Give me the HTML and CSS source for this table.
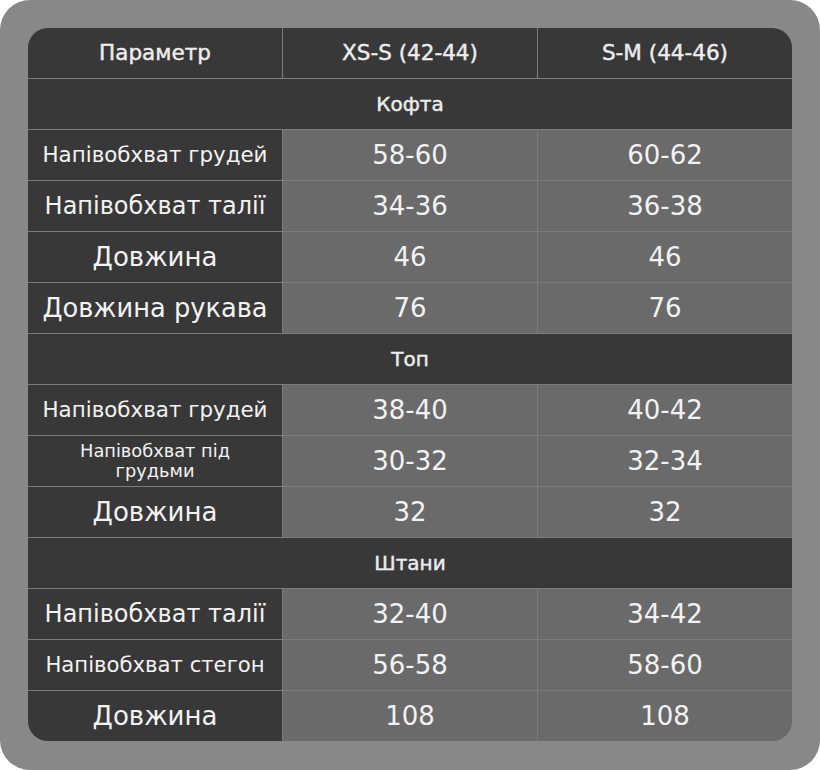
FILE: index.html
```html
<!DOCTYPE html>
<html lang="uk">
<head>
<meta charset="utf-8">
<title>Розмірна сітка</title>
<link rel="stylesheet" href="styles.css">
</head>
<body>
<div class="frame">
  <div class="grid">
    <div class="cell head">Параметр</div>
    <div class="cell head">XS-S (42-44)</div>
    <div class="cell head">S-M (44-46)</div>

    <div class="cell cat">Кофта</div>

    <div class="cell name s21">Напівобхват грудей</div>
    <div class="cell val">58-60</div>
    <div class="cell val">60-62</div>

    <div class="cell name s24">Напівобхват талії</div>
    <div class="cell val">34-36</div>
    <div class="cell val">36-38</div>

    <div class="cell name s26">Довжина</div>
    <div class="cell val">46</div>
    <div class="cell val">46</div>

    <div class="cell name s25">Довжина рукава</div>
    <div class="cell val">76</div>
    <div class="cell val">76</div>

    <div class="cell cat">Топ</div>

    <div class="cell name s21">Напівобхват грудей</div>
    <div class="cell val">38-40</div>
    <div class="cell val">40-42</div>

    <div class="cell name s17">Напівобхват під<br>грудьми</div>
    <div class="cell val">30-32</div>
    <div class="cell val">32-34</div>

    <div class="cell name s26">Довжина</div>
    <div class="cell val">32</div>
    <div class="cell val">32</div>

    <div class="cell cat">Штани</div>

    <div class="cell name s24">Напівобхват талії</div>
    <div class="cell val">32-40</div>
    <div class="cell val">34-42</div>

    <div class="cell name s21b">Напівобхват стегон</div>
    <div class="cell val">56-58</div>
    <div class="cell val">58-60</div>

    <div class="cell name s26">Довжина</div>
    <div class="cell val">108</div>
    <div class="cell val">108</div>
  </div>
</div>
</body>
</html>
```
FILE: styles.css
```css
html, body {
  margin: 0;
  padding: 0;
  background: #ffffff;
}

body {
  font-family: "DejaVu Sans", "Noto Sans", sans-serif;
  color: #f2f2f2;
}

.frame {
  width: 820px;
  height: 770px;
  box-sizing: border-box;
  padding: 28px;
  background: #888888;
  border-radius: 30px;
}

.grid {
  display: grid;
  grid-template-columns: repeat(3, 1fr);
  grid-auto-rows: 50px;
  gap: 1px;
  background: #7c7c7c;
  border-radius: 20px;
  overflow: hidden;
}

.cell {
  display: flex;
  align-items: center;
  justify-content: center;
  text-align: center;
  background: #383838;
  line-height: 1.1;
}

.head {
  font-size: 21.5px;
  font-weight: 400;
  -webkit-text-stroke: 0.45px #ececec;
  color: #ececec;
}

.cat {
  grid-column: 1 / -1;
  font-size: 20px;
  font-weight: 400;
  -webkit-text-stroke: 0.45px #ececec;
  color: #ececec;
}

.val {
  background: #6a6a6a;
  font-size: 26px;
}

.s17 { font-size: 17.8px; line-height: 1.1; }
.s21 { font-size: 21.4px; }
.s21b { font-size: 21.2px; }
.s24 { font-size: 24px; }
.s25 { font-size: 25.7px; }
.s26 { font-size: 26px; }
```
